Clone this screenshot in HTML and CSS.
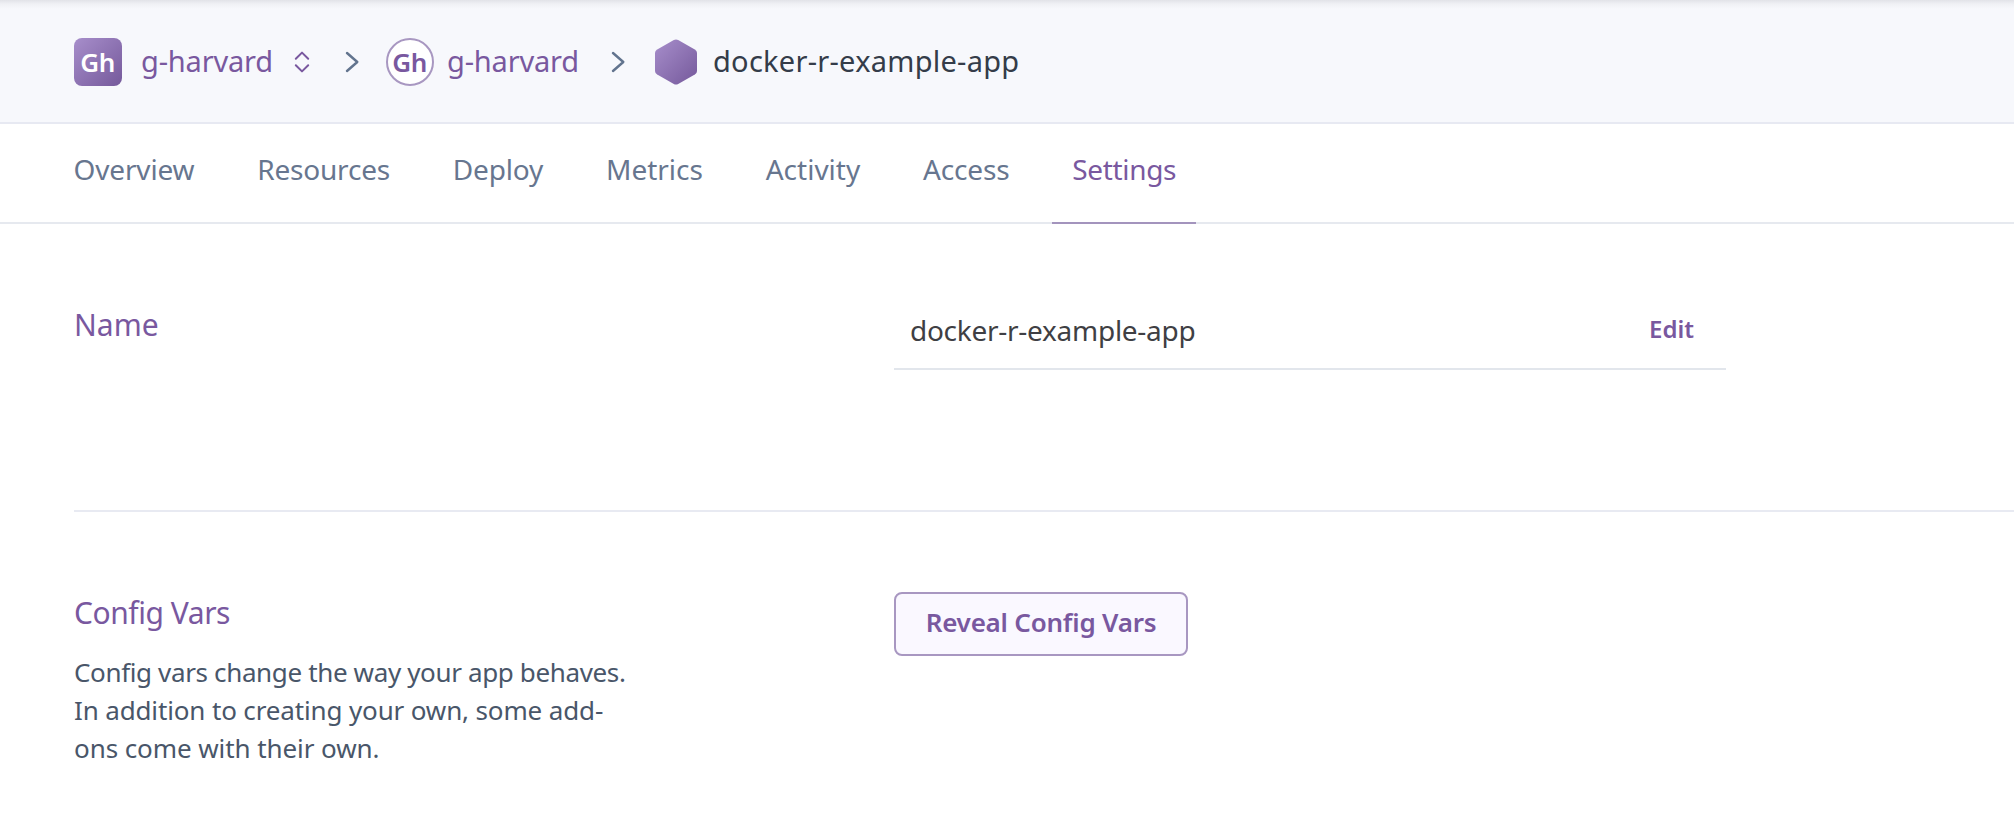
FILE: index.html
```html
<!DOCTYPE html>
<html lang="en">
<head>
<meta charset="utf-8">
<title>docker-r-example-app · Settings</title>
<link rel="stylesheet" href="styles.css">
</head>
<body>
<header class="crumbs">
  <span class="team-badge">Gh</span>
  <a class="crumb crumb-team">g-harvard</a>
  <svg class="switcher" width="16" height="24" viewBox="0 0 16 24"><path d="M1.8 8.8 8 2.6l6.2 6.2M1.8 15.2 8 21.4l6.2-6.2"/></svg>
  <svg class="chevron" width="16" height="24" viewBox="0 0 16 24"><path d="M3 3l10.3 9L3 21"/></svg>
  <span class="owner-badge">Gh</span>
  <a class="crumb crumb-owner">g-harvard</a>
  <svg class="chevron chevron-app" width="16" height="24" viewBox="0 0 16 24"><path d="M3 3l10.3 9L3 21"/></svg>
  <svg class="hexagon" width="42" height="46" viewBox="0 0 42 46">
    <defs><linearGradient id="hex" x1="0" y1="0" x2="1" y2="1"><stop offset="0" stop-color="#a78ecb"/><stop offset="1" stop-color="#75599b"/></linearGradient></defs>
    <path fill="url(#hex)" d="M18.8 1.1Q21 0 23.2 1.1L39.8 10.5Q42 11.8 42 14V32Q42 34.2 39.8 35.5L23.2 44.9Q21 46 18.8 44.9L2.2 35.5Q0 34.2 0 32V14Q0 11.8 2.2 10.5Z"/>
  </svg>
  <span class="crumb crumb-app">docker-r-example-app</span>
</header>
<nav class="tabs">
  <a class="tab">Overview</a>
  <a class="tab tight">Resources</a>
  <a class="tab">Deploy</a>
  <a class="tab wide">Metrics</a>
  <a class="tab wide">Activity</a>
  <a class="tab">Access</a>
  <a class="tab active">Settings</a>
</nav>
<main class="settings">
  <section class="row row-name">
    <h2 class="title">Name</h2>
    <div class="field"><span class="value">docker-r-example-app</span><a class="edit">Edit</a></div>
  </section>
  <section class="row row-config">
    <div class="about">
      <h2 class="title title-config">Config Vars</h2>
      <p class="text"><span class="line-first">Config vars change the way your app behaves.</span><br><span class="line-second">In addition to creating your own, some add-</span><br>ons come with their own.</p>
    </div>
    <button class="reveal">Reveal Config Vars</button>
  </section>
</main>
</body>
</html>
```
FILE: styles.css
```css
* { box-sizing: border-box; }
body {
  margin: 0;
  background: #fff;
  color: #3f3f44;
  font-family: "Noto Sans", "Open Sans", sans-serif;
  -webkit-font-smoothing: antialiased;
}
.crumbs {
  display: flex;
  align-items: center;
  height: 124px;
  padding: 2px 74px 0;
  border-bottom: 2px solid #e7e9f2;
  background: linear-gradient(#e2e3e8 0, #f0f1f5 4px, #f7f8fc 9px);
}
.team-badge, .owner-badge {
  flex: none;
  width: 48px;
  height: 48px;
  padding-right: 1px;
  text-align: center;
  font-size: 26px;
  line-height: 48px;
  font-weight: 600;
  letter-spacing: -0.4px;
}
.team-badge {
  border-radius: 8px;
  background: linear-gradient(135deg, #a78ecb, #75599b);
  color: #fff;
}
.owner-badge {
  margin-left: 26px;
  border: 2px solid #a897c1;
  border-radius: 50%;
  background: #fff;
  color: #79589f;
  line-height: 44px;
}
.crumb {
  padding-bottom: 2px;
  font-size: 29px;
  line-height: 44px;
  letter-spacing: -0.18px;
  color: #79589f;
  white-space: nowrap;
}
.crumb-team { width: 132px; margin-left: 19px; }
.crumb-owner { width: 132px; margin-left: 13px; }
.crumb-app { margin-left: 16px; letter-spacing: 0.26px; color: #343c49; }
.switcher, .chevron { flex: none; fill: none; stroke-width: 2; stroke-linecap: round; stroke-linejoin: round; }
.switcher { margin-left: 21px; stroke: #79589f; }
.chevron { margin-left: 34px; stroke: #62748e; stroke-width: 2.4; }
.chevron-app { margin-left: 31px; }
.hexagon { flex: none; margin-left: 29px; }
.tabs {
  display: flex;
  gap: 22.8px;
  height: 100px;
  padding-left: 53.5px;
  border-bottom: 2px solid #e6e9ef;
}
.tab {
  height: 100px;
  padding: 25px 20px 0;
  font-size: 28px;
  line-height: 40px;
  letter-spacing: -0.15px;
  color: #67768f;
  white-space: nowrap;
}
.tight { letter-spacing: -0.2px; }
.wide { letter-spacing: 0; }
.active { letter-spacing: -0.35px; color: #79589f; border-bottom: 2px solid #a394bd; }
.settings { padding-left: 74px; }
.row { display: flex; }
.row-name { height: 288px; padding-top: 80px; border-bottom: 2px solid #e8eaf2; }
.title { width: 820px; margin: 0; padding-top: 1px; font-size: 30px; line-height: 40px; font-weight: 400; color: #79589f; }
.title-config { letter-spacing: -0.45px; }
.field {
  display: flex;
  justify-content: space-between;
  width: 832px;
  height: 66px;
  padding: 6px 32px 0 16px;
  border-bottom: 2px solid #e2e6ec;
  line-height: 40px;
}
.value { font-size: 28px; letter-spacing: -0.27px; }
.edit { font-size: 24px; line-height: 38px; font-weight: 600; color: #79589f; }
.row-config { padding-top: 80px; align-items: flex-start; }
.about { width: 820px; }
.text { margin: 20px 0 0; font-size: 26px; line-height: 38px; letter-spacing: -0.08px; color: #495669; white-space: nowrap; }
.line-first { letter-spacing: -0.36px; }
.line-second { letter-spacing: -0.14px; }
.reveal {
  width: 294px;
  height: 64px;
  padding: 0 0 5px;
  border: 2px solid #a897c1;
  border-radius: 8px;
  background: #faf8ff;
  color: #79589f;
  font: 600 26px/40px "Noto Sans", sans-serif;
  letter-spacing: -0.22px;
}
```
